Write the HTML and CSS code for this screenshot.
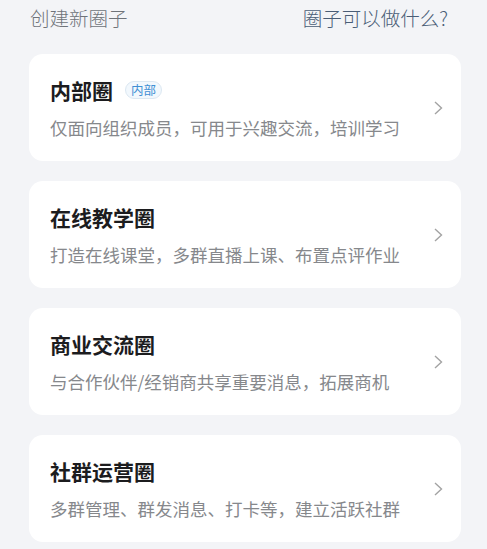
FILE: index.html
```html
<!DOCTYPE html>
<html lang="zh-CN">
<head>
<meta charset="utf-8">
<title>创建新圈子</title>
<link rel="stylesheet" href="styles.css">
</head>
<body>
<div class="page">
  <div class="header">
    <span class="header-title">创建新圈子</span>
    <span class="header-link">圈子可以做什么?</span>
  </div>
  <div class="list">
    <div class="card">
      <div class="card-text">
        <div class="card-title">内部圈<span class="badge">内部</span></div>
        <div class="card-desc">仅面向组织成员，可用于兴趣交流，培训学习</div>
      </div>
      <svg class="arrow" viewBox="0 0 9 14" width="9" height="14"><path d="M1 1 L7.5 7 L1 13" fill="none" stroke="#a3a3a3" stroke-width="1.4"/></svg>
    </div>
    <div class="card">
      <div class="card-text">
        <div class="card-title">在线教学圈</div>
        <div class="card-desc">打造在线课堂，多群直播上课、布置点评作业</div>
      </div>
      <svg class="arrow" viewBox="0 0 9 14" width="9" height="14"><path d="M1 1 L7.5 7 L1 13" fill="none" stroke="#a3a3a3" stroke-width="1.4"/></svg>
    </div>
    <div class="card">
      <div class="card-text">
        <div class="card-title">商业交流圈</div>
        <div class="card-desc">与合作伙伴/经销商共享重要消息，拓展商机</div>
      </div>
      <svg class="arrow" viewBox="0 0 9 14" width="9" height="14"><path d="M1 1 L7.5 7 L1 13" fill="none" stroke="#a3a3a3" stroke-width="1.4"/></svg>
    </div>
    <div class="card">
      <div class="card-text">
        <div class="card-title">社群运营圈</div>
        <div class="card-desc">多群管理、群发消息、打卡等，建立活跃社群</div>
      </div>
      <svg class="arrow" viewBox="0 0 9 14" width="9" height="14"><path d="M1 1 L7.5 7 L1 13" fill="none" stroke="#a3a3a3" stroke-width="1.4"/></svg>
    </div>
  </div>
</div>
</body>
</html>
```
FILE: styles.css
```css
html, body {
  margin: 0;
  padding: 0;
  background: #f3f4f7;
}
body {
  font-family: "Noto Sans CJK SC", "Noto Sans", sans-serif;
}
.page {
  padding: 4px 26px 0 29px;
}
.header {
  display: flex;
  justify-content: space-between;
  align-items: center;
  height: 27px;
  padding: 0 13px 0 1px;
  font-size: 19.5px;
  line-height: 27px;
  font-weight: 300;
}
.header-title {
  color: #6f7379;
}
.header-link {
  color: #4a5d76;
}
.list {
  display: flex;
  flex-direction: column;
  gap: 20px;
  margin-top: 23px;
}
.card {
  display: flex;
  align-items: center;
  justify-content: space-between;
  background: #ffffff;
  border-radius: 14px;
  padding: 22px 18px 21px 21px;
}
.card-title {
  display: flex;
  align-items: center;
  font-size: 21px;
  line-height: 28px;
  font-weight: 700;
  color: #1c1c1e;
}
.badge {
  margin-left: 12px;
  font-size: 12.5px;
  line-height: 16px;
  font-weight: 400;
  color: #3f8fd4;
  background: #f2f8fd;
  border: 1px solid #dce8f2;
  border-radius: 9px;
  padding: 0 5px;
}
.card-desc {
  margin-top: 12px;
  font-size: 17.5px;
  line-height: 24px;
  color: #86888c;
  white-space: nowrap;
}
.arrow {
  display: block;
  flex: none;
}
```
